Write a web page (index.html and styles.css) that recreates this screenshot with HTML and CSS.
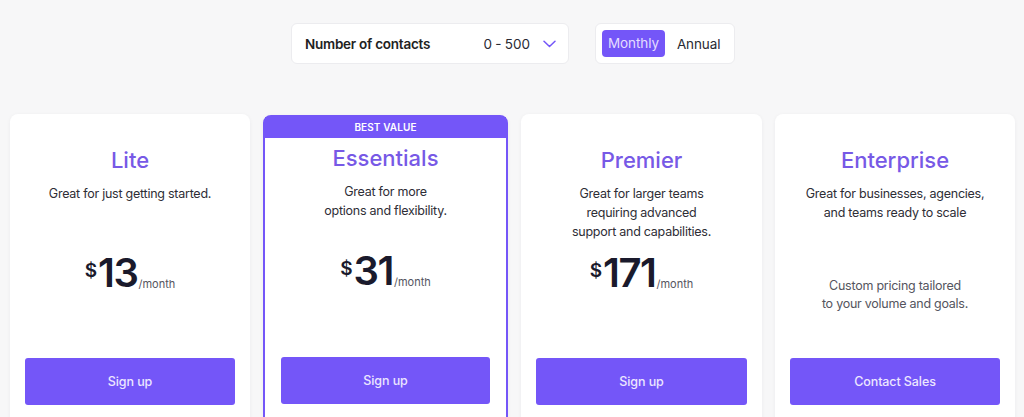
FILE: index.html
```html
<!DOCTYPE html>
<html lang="en">
<head>
<meta charset="utf-8">
<title>Pricing</title>
<link rel="stylesheet" href="styles.css">
</head>
<body>
<div class="controls">
  <div class="select">
    <span class="select-label">Number of contacts</span>
    <span class="select-value">0 - 500</span>
    <svg class="chevron" width="13" height="8" viewBox="0 0 13 8"><path d="M1 1.2 L6.5 6.5 L12 1.2" fill="none" stroke="#7456f8" stroke-width="1.5" stroke-linecap="round" stroke-linejoin="round"/></svg>
  </div>
  <div class="toggle">
    <span class="toggle-opt active">Monthly</span>
    <span class="toggle-opt">Annual</span>
  </div>
</div>
<div class="plans">
  <div class="card">
    <h2 class="plan-name">Lite</h2>
    <p class="plan-desc">Great for just getting started.</p>
    <div class="price"><span class="cur">$</span><span class="amt">13</span><span class="per">/month</span></div>
    <a class="btn">Sign up</a>
  </div>
  <div class="card featured">
    <div class="badge">BEST VALUE</div>
    <h2 class="plan-name">Essentials</h2>
    <p class="plan-desc">Great for more<br>options and flexibility.</p>
    <div class="price"><span class="cur">$</span><span class="amt">31</span><span class="per">/month</span></div>
    <a class="btn">Sign up</a>
  </div>
  <div class="card">
    <h2 class="plan-name">Premier</h2>
    <p class="plan-desc">Great for larger teams<br>requiring advanced<br>support and capabilities.</p>
    <div class="price"><span class="cur">$</span><span class="amt">171</span><span class="per">/month</span></div>
    <a class="btn">Sign up</a>
  </div>
  <div class="card">
    <h2 class="plan-name">Enterprise</h2>
    <p class="plan-desc">Great for businesses, agencies,<br>and teams ready to scale</p>
    <div class="price custom">Custom pricing tailored<br>to your volume and goals.</div>
    <a class="btn">Contact Sales</a>
  </div>
</div>
</body>
</html>
```
FILE: styles.css
```css
* { box-sizing: border-box; }
html, body { margin: 0; padding: 0; }
body {
  background: #f7f7f8;
  font-family: Inter, "Noto Sans", sans-serif;
  color: #2a2a33;
  height: 417px;
  overflow: hidden;
}
.controls {
  display: flex;
  justify-content: center;
  gap: 26px;
  padding-top: 23px;
  padding-left: 2px;
}
.select {
  width: 278px;
  height: 41px;
  background: #fff;
  border: 1px solid #ececef;
  border-radius: 6px;
  display: flex;
  align-items: center;
  padding: 0 12px 0 13px;
}
.select-label {
  font-size: 13.5px;
  font-weight: 600;
  letter-spacing: -0.25px;
  color: #222;
  flex: 1;
}
.select-value {
  font-size: 13.5px;
  color: #2a2a33;
  word-spacing: -0.5px;
  margin-right: 13px;
}
.chevron { display: block; }
.toggle {
  width: 140px;
  height: 41px;
  background: #fff;
  border: 1px solid #ececef;
  border-radius: 6px;
  display: flex;
  align-items: center;
  padding: 0 6px;
  gap: 12px;
}
.toggle-opt {
  font-size: 13.5px;
  color: #2a2a33;
  letter-spacing: -0.1px;
}
.toggle-opt.active {
  background: #7456f8;
  color: #e4ddff;
  border-radius: 4px;
  height: 27px;
  line-height: 27px;
  padding: 0 6px;
}
.plans {
  display: grid;
  grid-template-columns: 240px 245px 241px 240px;
  column-gap: 13px;
  padding-left: 10px;
  margin-top: 50px;
}
.card {
  background: #fff;
  border-radius: 8px;
  height: 330px;
  display: flex;
  flex-direction: column;
  align-items: center;
  padding: 32px 15px 39px;
  box-shadow: 0 1px 4px rgba(40, 40, 60, 0.05);
  text-align: center;
}
.card.featured {
  border: 2px solid #7456f8;
  padding: 0 16px 39px;
  margin-top: 1px;
}
.badge {
  align-self: stretch;
  margin: 0 -16px 6px;
  height: 21px;
  background: #7456f8;
  color: #fff;
  font-size: 10px;
  font-weight: 600;
  line-height: 21px;
  letter-spacing: 0.1px;
}
.plan-name {
  margin: 0;
  font-size: 22px;
  line-height: 28px;
  font-weight: 500;
  color: #7759e6;
}
.plan-desc {
  margin: 10px 0 0;
  font-size: 12.5px;
  line-height: 19px;
  letter-spacing: -0.25px;
  min-height: 57px;
  color: #2e2e36;
}
.price {
  margin-top: 10px;
  height: 44px;
  display: flex;
  align-items: flex-start;
  justify-content: center;
  color: #1a1a2c;
}
.cur {
  font-size: 19px;
  font-weight: 600;
  margin-top: 8px;
  margin-right: 1px;
}
.amt {
  font-size: 40px;
  line-height: 44px;
  font-weight: 600;
  letter-spacing: -1.5px;
}
.per {
  font-size: 11px;
  color: #555560;
  margin-top: 26px;
  margin-left: 1px;
}
.price.custom {
  display: block;
  height: auto;
  margin-top: 36px;
  font-size: 12.5px;
  line-height: 18px;
  letter-spacing: -0.25px;
  color: #55555e;
}
.btn {
  margin-top: auto;
  align-self: stretch;
  height: 47px;
  border-radius: 3px;
  background: #7456f8;
  color: #ece6ff;
  font-size: 12.5px;
  font-weight: 500;
  letter-spacing: -0.1px;
  display: flex;
  align-items: center;
  justify-content: center;
}
```
